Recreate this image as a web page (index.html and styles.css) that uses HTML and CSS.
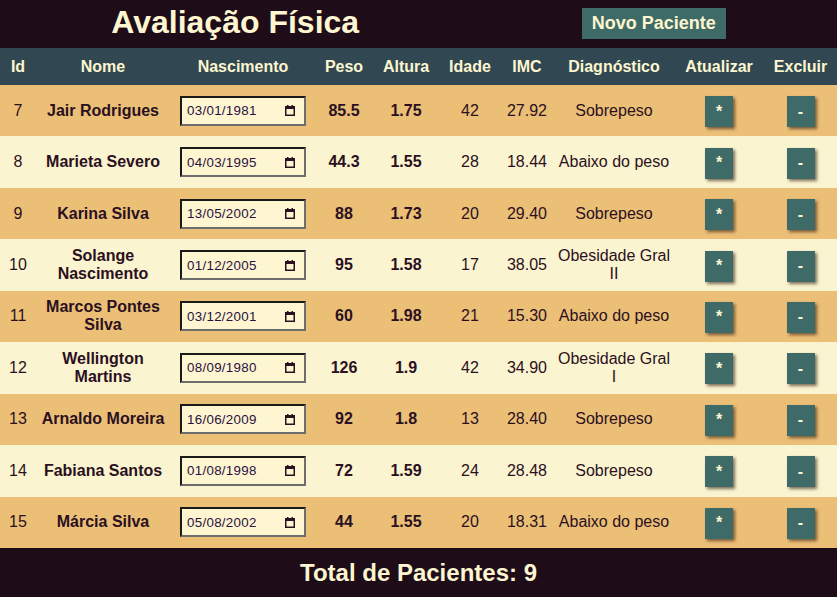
FILE: index.html
```html
<!DOCTYPE html>
<html lang="pt-BR">
<head>
<meta charset="utf-8">
<title>Avaliação Física</title>
<link rel="stylesheet" href="styles.css">
</head>
<body>
<div class="page">
  <header class="top">
    <h1 class="title">Avaliação Física</h1>
    <button class="btn-new">Novo Paciente</button>
  </header>
  <table class="grid">
    <colgroup>
      <col class="c-id"><col class="c-nome"><col class="c-nasc"><col class="c-peso"><col class="c-alt"><col class="c-idade"><col class="c-imc"><col class="c-diag"><col class="c-upd"><col class="c-del">
    </colgroup>
    <thead>
      <tr><th>Id</th><th>Nome</th><th>Nascimento</th><th>Peso</th><th>Altura</th><th>Idade</th><th>IMC</th><th>Diagnóstico</th><th>Atualizar</th><th>Excluir</th></tr>
    </thead>
    <tbody>
      <tr><td>7</td><td class="b">Jair Rodrigues</td><td><label class="date"><input class="date-text" type="text" value="03/01/1981"><svg class="cal" viewBox="0 0 10 11" width="10" height="11"><path d="M0.75 1.75h8.5v8.5h-8.5z" fill="none" stroke="#2a1020" stroke-width="1.5"/><rect x="0" y="1" width="10" height="3" fill="#2a1020"/><rect x="2" y="0" width="1.5" height="2" fill="#2a1020"/><rect x="6.5" y="0" width="1.5" height="2" fill="#2a1020"/></svg></label></td><td class="b">85.5</td><td class="b">1.75</td><td>42</td><td>27.92</td><td>Sobrepeso</td><td><button class="act">*</button></td><td><button class="act">-</button></td></tr>
      <tr><td>8</td><td class="b">Marieta Severo</td><td><label class="date"><input class="date-text" type="text" value="04/03/1995"><svg class="cal" viewBox="0 0 10 11" width="10" height="11"><path d="M0.75 1.75h8.5v8.5h-8.5z" fill="none" stroke="#2a1020" stroke-width="1.5"/><rect x="0" y="1" width="10" height="3" fill="#2a1020"/><rect x="2" y="0" width="1.5" height="2" fill="#2a1020"/><rect x="6.5" y="0" width="1.5" height="2" fill="#2a1020"/></svg></label></td><td class="b">44.3</td><td class="b">1.55</td><td>28</td><td>18.44</td><td>Abaixo do peso</td><td><button class="act">*</button></td><td><button class="act">-</button></td></tr>
      <tr><td>9</td><td class="b">Karina Silva</td><td><label class="date"><input class="date-text" type="text" value="13/05/2002"><svg class="cal" viewBox="0 0 10 11" width="10" height="11"><path d="M0.75 1.75h8.5v8.5h-8.5z" fill="none" stroke="#2a1020" stroke-width="1.5"/><rect x="0" y="1" width="10" height="3" fill="#2a1020"/><rect x="2" y="0" width="1.5" height="2" fill="#2a1020"/><rect x="6.5" y="0" width="1.5" height="2" fill="#2a1020"/></svg></label></td><td class="b">88</td><td class="b">1.73</td><td>20</td><td>29.40</td><td>Sobrepeso</td><td><button class="act">*</button></td><td><button class="act">-</button></td></tr>
      <tr><td>10</td><td class="b">Solange Nascimento</td><td><label class="date"><input class="date-text" type="text" value="01/12/2005"><svg class="cal" viewBox="0 0 10 11" width="10" height="11"><path d="M0.75 1.75h8.5v8.5h-8.5z" fill="none" stroke="#2a1020" stroke-width="1.5"/><rect x="0" y="1" width="10" height="3" fill="#2a1020"/><rect x="2" y="0" width="1.5" height="2" fill="#2a1020"/><rect x="6.5" y="0" width="1.5" height="2" fill="#2a1020"/></svg></label></td><td class="b">95</td><td class="b">1.58</td><td>17</td><td>38.05</td><td>Obesidade Gral II</td><td><button class="act">*</button></td><td><button class="act">-</button></td></tr>
      <tr><td>11</td><td class="b">Marcos Pontes Silva</td><td><label class="date"><input class="date-text" type="text" value="03/12/2001"><svg class="cal" viewBox="0 0 10 11" width="10" height="11"><path d="M0.75 1.75h8.5v8.5h-8.5z" fill="none" stroke="#2a1020" stroke-width="1.5"/><rect x="0" y="1" width="10" height="3" fill="#2a1020"/><rect x="2" y="0" width="1.5" height="2" fill="#2a1020"/><rect x="6.5" y="0" width="1.5" height="2" fill="#2a1020"/></svg></label></td><td class="b">60</td><td class="b">1.98</td><td>21</td><td>15.30</td><td>Abaixo do peso</td><td><button class="act">*</button></td><td><button class="act">-</button></td></tr>
      <tr><td>12</td><td class="b">Wellington Martins</td><td><label class="date"><input class="date-text" type="text" value="08/09/1980"><svg class="cal" viewBox="0 0 10 11" width="10" height="11"><path d="M0.75 1.75h8.5v8.5h-8.5z" fill="none" stroke="#2a1020" stroke-width="1.5"/><rect x="0" y="1" width="10" height="3" fill="#2a1020"/><rect x="2" y="0" width="1.5" height="2" fill="#2a1020"/><rect x="6.5" y="0" width="1.5" height="2" fill="#2a1020"/></svg></label></td><td class="b">126</td><td class="b">1.9</td><td>42</td><td>34.90</td><td>Obesidade Gral I</td><td><button class="act">*</button></td><td><button class="act">-</button></td></tr>
      <tr><td>13</td><td class="b">Arnaldo Moreira</td><td><label class="date"><input class="date-text" type="text" value="16/06/2009"><svg class="cal" viewBox="0 0 10 11" width="10" height="11"><path d="M0.75 1.75h8.5v8.5h-8.5z" fill="none" stroke="#2a1020" stroke-width="1.5"/><rect x="0" y="1" width="10" height="3" fill="#2a1020"/><rect x="2" y="0" width="1.5" height="2" fill="#2a1020"/><rect x="6.5" y="0" width="1.5" height="2" fill="#2a1020"/></svg></label></td><td class="b">92</td><td class="b">1.8</td><td>13</td><td>28.40</td><td>Sobrepeso</td><td><button class="act">*</button></td><td><button class="act">-</button></td></tr>
      <tr><td>14</td><td class="b">Fabiana Santos</td><td><label class="date"><input class="date-text" type="text" value="01/08/1998"><svg class="cal" viewBox="0 0 10 11" width="10" height="11"><path d="M0.75 1.75h8.5v8.5h-8.5z" fill="none" stroke="#2a1020" stroke-width="1.5"/><rect x="0" y="1" width="10" height="3" fill="#2a1020"/><rect x="2" y="0" width="1.5" height="2" fill="#2a1020"/><rect x="6.5" y="0" width="1.5" height="2" fill="#2a1020"/></svg></label></td><td class="b">72</td><td class="b">1.59</td><td>24</td><td>28.48</td><td>Sobrepeso</td><td><button class="act">*</button></td><td><button class="act">-</button></td></tr>
      <tr><td>15</td><td class="b">Márcia Silva</td><td><label class="date"><input class="date-text" type="text" value="05/08/2002"><svg class="cal" viewBox="0 0 10 11" width="10" height="11"><path d="M0.75 1.75h8.5v8.5h-8.5z" fill="none" stroke="#2a1020" stroke-width="1.5"/><rect x="0" y="1" width="10" height="3" fill="#2a1020"/><rect x="2" y="0" width="1.5" height="2" fill="#2a1020"/><rect x="6.5" y="0" width="1.5" height="2" fill="#2a1020"/></svg></label></td><td class="b">44</td><td class="b">1.55</td><td>20</td><td>18.31</td><td>Abaixo do peso</td><td><button class="act">*</button></td><td><button class="act">-</button></td></tr>
    </tbody>
  </table>
  <footer class="foot">Total de Pacientes: 9</footer>
</div>
</body>
</html>
```
FILE: styles.css
```css
html, body {
  margin: 0;
  padding: 0;
  background: #1e0d19;
  font-family: "Liberation Sans", Arial, sans-serif;
}
.page {
  width: 837px;
}
.top {
  height: 48px;
  display: flex;
  justify-content: space-around;
  align-items: center;
}
.title {
  margin: 0;
  font-size: 32px;
  font-weight: bold;
  color: #fdf6d0;
  line-height: 36px;
  position: relative;
  top: -2px;
}
.btn-new {
  background: #3e6b67;
  color: #fdf6d0;
  border: none;
  font-family: "Liberation Sans", Arial, sans-serif;
  font-weight: bold;
  font-size: 18px;
  height: 31px;
  padding: 0 10px;
  position: relative;
  top: -1px;
}
.grid {
  width: 837px;
  border-collapse: collapse;
  table-layout: fixed;
  color: #2a1020;
  font-size: 16px;
}
.c-id { width: 36px; }
.c-nome { width: 134px; }
.c-nasc { width: 146px; }
.c-peso { width: 56px; }
.c-alt { width: 68px; }
.c-idade { width: 60px; }
.c-imc { width: 54px; }
.c-diag { width: 120px; }
.c-upd { width: 90px; }
.c-del { width: 73px; }
.grid thead tr {
  background: #314852;
  height: 37px;
}
.grid th {
  color: #fdf6d0;
  font-weight: bold;
  padding: 0 2px;
  text-align: center;
}
.grid tbody tr {
  height: 51.44px;
}
.grid tbody tr:nth-child(odd) {
  background: #ecbf77;
}
.grid tbody tr:nth-child(even) {
  background: #fbf4d0;
}
.grid td {
  text-align: center;
  padding: 0 3px;
  line-height: 18px;
}
.grid td.b {
  font-weight: bold;
}
.date {
  box-sizing: border-box;
  width: 126px;
  height: 30px;
  display: inline-flex;
  align-items: center;
  vertical-align: middle;
  border: 2px solid #6d6d6d;
  border-top-color: #1a1a1a;
  border-left-color: #1a1a1a;
  background: #fdf6d0;
  padding: 0 9px 0 5px;
  gap: 4px;
}
.date-text {
  flex: 1;
  min-width: 0;
  border: none;
  outline: none;
  background: transparent;
  padding: 0;
  margin: 0;
  color: #2a1040;
  font-family: "Liberation Sans", Arial, sans-serif;
  font-size: 13.33px;
  letter-spacing: 0.3px;
}
.cal {
  flex: none;
  display: block;
}
.act {
  width: 28px;
  height: 31px;
  background: #3e6b67;
  color: #fdf6d0;
  border: none;
  font-family: "Liberation Sans", Arial, sans-serif;
  font-weight: bold;
  font-size: 16px;
  box-shadow: 2px 2px 3px rgba(40, 20, 10, 0.6);
  padding: 0;
  position: relative;
  top: 1px;
}
.foot {
  height: 49px;
  line-height: 49px;
  text-align: center;
  color: #fdf6d0;
  font-weight: bold;
  font-size: 24px;
}
```
